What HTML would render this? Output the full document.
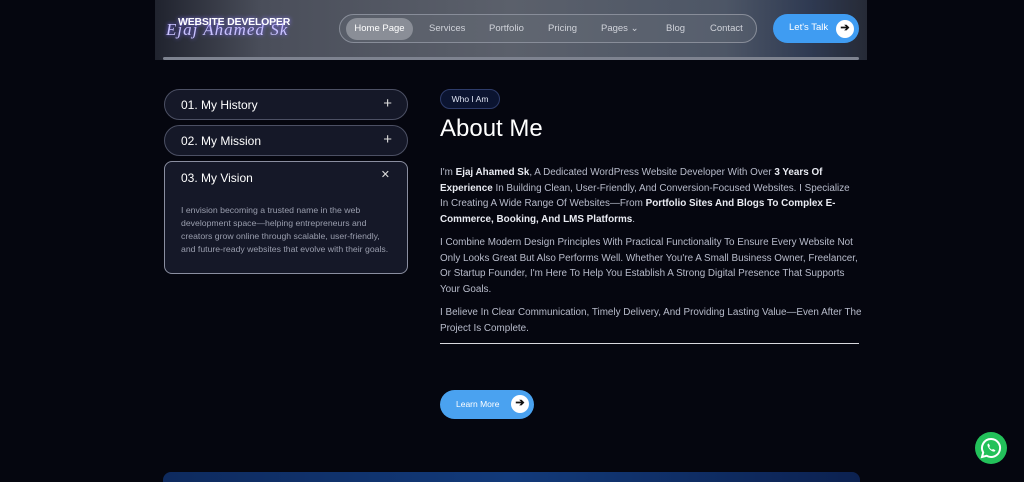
<!DOCTYPE html>
<html><head><meta charset="utf-8"><style>
*{margin:0;padding:0;box-sizing:border-box}
body{width:1024px;height:479px;background:#05060f;font-family:"Liberation Sans",sans-serif;position:relative;overflow:hidden;color:#fff}
.hdr{position:absolute;left:155px;top:0;width:712px;height:60px;background:linear-gradient(90deg,#20232e 0%,#4a4e5a 15%,#5b606b 50%,#4d5666 80%,#2f3a52 92%,#262a36 100%);}
.hdr:after{content:"";position:absolute;left:8px;right:8px;top:57px;height:3px;background:#7e8390;border-radius:2px}
.logo{position:absolute;left:178px;top:16px;color:#fff;font-weight:bold;font-size:10.5px;letter-spacing:-.2px;text-shadow:0 0 4px #8a7bff}
.logo2{position:absolute;left:166px;top:20px;font-family:"Liberation Serif",serif;font-style:italic;font-size:17px;color:#c9c2ff;text-shadow:0 0 4px #7b6bff;letter-spacing:1px}
.nav{position:absolute;left:339px;top:14px;width:418px;height:29px;border:1px solid #888d99;border-radius:15px;background:rgba(110,115,125,.3)}
.nav span{position:absolute;top:8px;font-size:9.5px;color:#d0d3da}
.nav .act{left:6px;top:3px;width:67px;height:22px;border-radius:11px;background:#8a8e97;color:#fff;text-align:center;line-height:22px}
.talk{position:absolute;left:773px;top:14px;width:86px;height:29px;border-radius:15px;background:#3f9cf2;font-size:9.5px;color:#fff}
.talk span{position:absolute;left:16px;top:8px}
.circ{position:absolute;width:18px;height:18px;border-radius:50%;background:#fff;color:#111;font-size:11px;text-align:center;line-height:17px;font-weight:bold}
.acc{position:absolute;left:164px;width:244px;border:1px solid #4c5064;background:#151828;border-radius:16px}
.acc .t{position:absolute;left:16px;font-size:12px;color:#fff}
.acc .i{position:absolute;right:15px;font-size:15px;color:#ddd}
.acc p{position:absolute;left:16px;top:42px;width:215px;font-size:8.7px;line-height:13px;color:#9a9eae}
.tag{position:absolute;left:440px;top:89px;width:60px;height:20px;border:1px solid #2e3c6a;border-radius:10px;background:#0b1430;font-size:8.5px;color:#dfe4f2;text-align:center;line-height:18px}
h1{position:absolute;left:440px;top:115px;font-weight:normal;font-size:24px;color:#fff}
.para{position:absolute;left:440px;width:420px;font-size:9.9px;line-height:15.6px;color:#b8bccb}
.para b{color:#e9ebf2}
.line{position:absolute;left:440px;top:343px;width:419px;height:1px;background:#d8d8de}
.lm{position:absolute;left:440px;top:390px;width:94px;height:29px;border-radius:15px;background:#4aa2f0;font-size:8.5px;color:#fff}
.lm span{position:absolute;left:16px;top:9px}
.wa{position:absolute;left:975px;top:432px;width:32px;height:32px;border-radius:50%;background:#23c15a}
.bot{position:absolute;left:163px;top:472px;width:697px;height:10px;border-radius:8px 8px 0 0;background:linear-gradient(90deg,#0e2a5e,#123a7a 50%,#0c2150)}
</style></head><body>
<div class="hdr"></div>
<div class="logo2">Ejaj Ahamed Sk</div>
<div class="logo">WEBSITE DEVELOPER</div>
<div class="nav">
<span class="act">Home Page</span>
<span style="left:89px">Services</span>
<span style="left:149px">Portfolio</span>
<span style="left:208px">Pricing</span>
<span style="left:261px">Pages ⌄</span>
<span style="left:326px">Blog</span>
<span style="left:370px">Contact</span>
</div>
<div class="talk"><span>Let's Talk</span><div class="circ" style="left:63px;top:6px">➔</div></div>

<div class="acc" style="top:89px;height:31px"><span class="t" style="top:8px">01. My History</span><span class="i" style="top:5px">+</span></div>
<div class="acc" style="top:125px;height:31px"><span class="t" style="top:8px">02. My Mission</span><span class="i" style="top:5px">+</span></div>
<div class="acc" style="top:161px;height:113px;border-color:#8a8ea0;border-radius:8px"><span class="t" style="top:9px">03. My Vision</span><span class="i" style="top:6px;font-size:11px;right:17px">✕</span>
<p>I envision becoming a trusted name in the web development space—helping entrepreneurs and creators grow online through scalable, user-friendly, and future-ready websites that evolve with their goals.</p></div>

<div class="tag">Who I Am</div>
<h1>About Me</h1>
<div class="para" style="top:165px">I'm <b>Ejaj Ahamed Sk</b>, A Dedicated WordPress Website Developer With Over <b>3 Years Of Experience</b> In Building Clean, User-Friendly, And Conversion-Focused Websites. I Specialize In Creating A Wide Range Of Websites—From <b>Portfolio Sites And Blogs To Complex E-Commerce, Booking, And LMS Platforms</b>.</div>
<div class="para" style="top:235px">I Combine Modern Design Principles With Practical Functionality To Ensure Every Website Not Only Looks Great But Also Performs Well. Whether You're A Small Business Owner, Freelancer, Or Startup Founder, I'm Here To Help You Establish A Strong Digital Presence That Supports Your Goals.</div>
<div class="para" style="top:305px;width:430px">I Believe In Clear Communication, Timely Delivery, And Providing Lasting Value—Even After The Project Is Complete.</div>
<div class="line"></div>
<div class="lm"><span>Learn More</span><div class="circ" style="left:71px;top:5px">➔</div></div>
<div class="wa"><svg width="32" height="32" viewBox="0 0 32 32"><path d="M16 7a9 9 0 0 0-7.8 13.5L7 25l4.6-1.2A9 9 0 1 0 16 7z" fill="none" stroke="#fff" stroke-width="2"/><path d="M12.5 12.5c.5-1 1.2-1 1.5-.5l1 2-.8 1c.6 1.3 1.5 2.2 2.8 2.8l1-.8 2 1c.5.3.5 1-.5 1.5-2.5 1-7.5-4-7-7z" fill="#fff"/></svg></div>
<div class="bot"></div>
</body></html>
